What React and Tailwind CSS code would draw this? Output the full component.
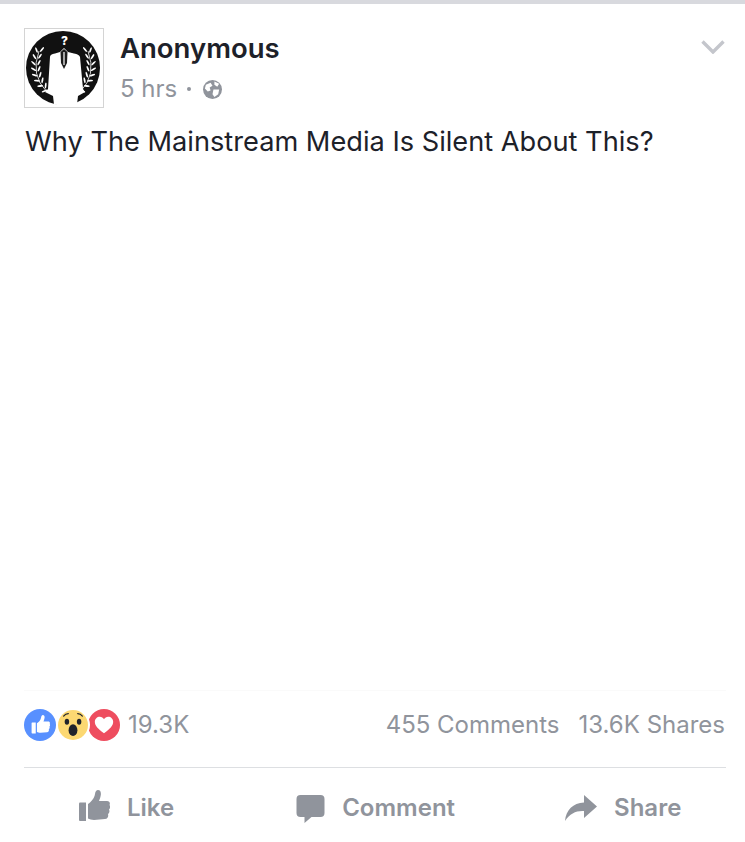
import React from 'react';

const FONT = 'font-["Inter","Liberation_Sans",sans-serif]';

// leaves of the left laurel branch, placed along the stem curve
const LEAVES = Array.from({ length: 8 }, (_, i) => {
    const t = i / 7;
    const x = (1 - t) * (1 - t) * 14 + 2 * t * (1 - t) * 5 + t * t * 22;
    const y = (1 - t) * (1 - t) * 22 + 2 * t * (1 - t) * 46 + t * t * 63;
    return { x, y, t };
});

function Laurel({ flip }) {
    return (
        <g transform={flip ? 'translate(77 0) scale(-1 1)' : undefined}>
            <path d="M14 22 Q5 46 22 63" fill="none" stroke="#fff" strokeWidth="0.8" />
            {LEAVES.map(({ x, y, t }, i) => (
                <g key={i}>
                    <ellipse cx={x - 2.5} cy={y - 1} rx="3" ry="0.9" fill="#fff" transform={`rotate(${70 - t * 90} ${x - 2.5} ${y - 1})`} />
                    <ellipse cx={x + 3} cy={y - 1.5} rx="3" ry="0.9" fill="#fff" transform={`rotate(${-50 - t * 40} ${x + 3} ${y - 1.5})`} />
                </g>
            ))}
        </g>
    );
}

function Avatar() {
    return (
        <div className="relative h-20 w-20 shrink-0 border border-[#d4d4d4] bg-white">
            <svg viewBox="0 0 78 78" className="h-full w-full">
                <circle cx="38" cy="39" r="37" fill="#111" />
                <Laurel />
                <Laurel flip />
                <path d="M25 28 Q25 25 30 24.500 L35 23 L39 19 L43 23 L49 24.500 Q54 25 55 28 L58 60 L60 63 L53 67 L52 75.500 Q40 77.500 29 75.500 L28 67 L20 63 L23 60 Z" fill="#fff" />
                <path d="M35.500 23 L39 20 L42.500 23 L42 34 L39 40 L36 34 Z" fill="#1c1c1c" />
                <path d="M38.400 23 H39.600 V36 H38.400 Z" fill="#fff" />
            </svg>
            <span className={`absolute left-[36px] top-[6px] text-[12px] font-extrabold leading-none text-white ${FONT}`}>?</span>
        </div>
    );
}

function ThumbIcon({ className }) {
    return (
        <svg viewBox="0 0 32 32" className={className} fill="currentColor">
            <path d="M1 13.500 Q1 12.500 2 12.500 H8 V31 H2 Q1 31 1 30 Z" />
            <path d="M10 14 C13 12 16.500 8 17 4 C17.300 1.500 18.500 0 20 0 C22.500 0 23.200 2.500 22.800 5 C22.500 7.500 21.500 9.500 21 11 H29 C31.500 11 32.500 13 31.500 15 C32.500 16.500 32.300 18.500 31 19.500 C31.800 21 31.500 23 30 24 C30.600 26 30 28.800 27 29 L16 30 C13.500 30 11.500 29 10 28.500 Z" />
        </svg>
    );
}

function Reactions() {
    return (
        <div className="flex items-center">
            <div className="flex h-8 w-8 items-center justify-center rounded-full bg-[#5890ff] text-white">
                <ThumbIcon className="mb-[2px] h-[19px] w-[19px]" />
            </div>
            <div className="z-10 ml-[2px] rounded-full bg-[#fcd872] ring-2 ring-white">
                <svg viewBox="0 0 32 32" className="h-[30px] w-[30px]">
                    <ellipse cx="9.500" cy="12.500" rx="2.400" ry="3.200" fill="#20232b" />
                    <ellipse cx="22.500" cy="12.500" rx="2.400" ry="3.200" fill="#20232b" />
                    <path d="M6 6.500 Q8 3.800 11 3.800 M21 3.800 Q24 3.800 26 6.500" fill="none" stroke="#20232b" strokeWidth="1.300" strokeLinecap="round" />
                    <ellipse cx="16" cy="21.500" rx="4.700" ry="6.300" fill="#20232b" />
                </svg>
            </div>
            <div className="flex h-8 w-8 items-center justify-center rounded-full bg-[#ee4d5f] text-white">
                <svg viewBox="0 0 24 22" className="h-[20px] w-[20px]" fill="currentColor">
                    <path d="M12 21 C5 15.500 1 12 1 7 C1 3.500 3.700 1 7 1 C9 1 11 2 12 4 C13 2 15 1 17 1 C20.300 1 23 3.500 23 7 C23 12 19 15.500 12 21 Z" />
                </svg>
            </div>
        </div>
    );
}

function ActionItem({ icon, label }) {
    return (
        <div className="flex items-center">
            {icon}
            <span className="text-[24px] font-semibold leading-none text-[#90949c]">{label}</span>
        </div>
    );
}

export default function App() {
    return (
        <div className={`flex h-[842px] w-[745px] flex-col overflow-hidden bg-white ${FONT}`}>
            <div className="h-1 bg-[#d8d9de]" />

            <div className="flex items-start pl-6 pr-5 pt-6">
                <Avatar />
                <div className="ml-4 flex-1">
                    <h1 className="mt-[4px] text-[27.5px] font-semibold leading-[32px] text-[#1d2129]">Anonymous</h1>
                    <div className="mt-[10px] flex items-center text-[24px] leading-[30px] text-[#90949c]">
                        <span>5 hrs</span>
                        <span className="ml-[10px] h-1 w-1 rounded-full bg-[#90949c]" />
                        <svg viewBox="0 0 20 20" className="ml-[12px] h-[19px] w-[19px]">
                            <circle cx="10" cy="10" r="10" fill="#90949c" />
                            <path d="M3 5 L8 3 L10 6 L7 8 L8 11 L5 12 L2 9 Z M12 1.500 L17 4 L15 7 L12 5 Z M11 10 L17 10 L16 15 L12 18 L10 15 Z" fill="#fff" />
                        </svg>
                    </div>
                </div>
                <svg viewBox="0 0 24 14" className="mt-[12px] h-[14px] w-[24px] text-[#c4c6cc]" fill="none" stroke="currentColor" strokeWidth="3.400">
                    <path d="M1.500 1.500 L12 12 L22.500 1.500" />
                </svg>
            </div>

            <p className="mt-[17px] px-[25px] text-[27.2px] leading-[34px] text-[#1d2129]">Why The Mainstream Media Is Silent About This?</p>

            <div className="flex-1" />

            <div className="ml-6 mr-[19px] flex h-[78px] items-center justify-between border-t border-b border-t-[#fafafa] border-b-[#dddfe2] pb-[8px] pr-px">
                <div className="flex items-center">
                    <Reactions />
                    <span className="ml-2 text-[24px] text-[#90949c]">19.3K</span>
                </div>
                <div className="flex gap-[19px] text-[24px] text-[#90949c]">
                    <span>455 Comments</span>
                    <span>13.6K Shares</span>
                </div>
            </div>

            <div className="flex h-[74px] items-center pt-[6px]">
                <div className="ml-[78px]">
                    <ActionItem
                        label="Like"
                        icon={<ThumbIcon className="mb-[4px] mr-[17px] h-[32px] w-[32px] text-[#90949c]" />}
                    />
                </div>
                <div className="ml-[122px]">
                    <ActionItem
                        label="Comment"
                        icon={
                            <svg viewBox="0 0 28 28" className="mt-[2px] mr-[17px] h-[28px] w-[29px] text-[#90949c]" fill="currentColor">
                                <path d="M4 0 H24 Q28 0 28 4 V18 Q28 22 24 22 H15 L8 28 V22 H4 Q0 22 0 18 V4 Q0 0 4 0 Z" />
                            </svg>
                        }
                    />
                </div>
                <div className="ml-[110px]">
                    <ActionItem
                        label="Share"
                        icon={
                            <svg viewBox="0 0 32 26" className="mr-[17px] h-[26px] w-[32px] text-[#90949c]" fill="currentColor">
                                <path d="M0 26 C1 15 8 8 19 7.500 V0 L32 11.500 L19 23 V16 C11 15.500 5 18.500 0 26 Z" />
                            </svg>
                        }
                    />
                </div>
            </div>
        </div>
    );
}
